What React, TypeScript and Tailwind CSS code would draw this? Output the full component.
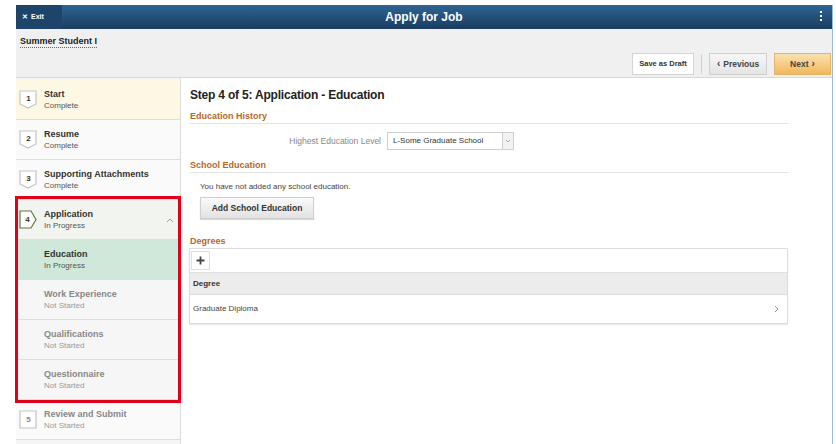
import React from "react";

type Step = {
  num?: string;
  title: string;
  status: string;
  kind: "done" | "current" | "sub" | "subActive" | "todo";
};

const steps: Step[] = [
  { num: "1", title: "Start", status: "Complete", kind: "done" },
  { num: "2", title: "Resume", status: "Complete", kind: "done" },
  { num: "3", title: "Supporting Attachments", status: "Complete", kind: "done" },
  { num: "4", title: "Application", status: "In Progress", kind: "current" },
  { title: "Education", status: "In Progress", kind: "subActive" },
  { title: "Work Experience", status: "Not Started", kind: "sub" },
  { title: "Qualifications", status: "Not Started", kind: "sub" },
  { title: "Questionnaire", status: "Not Started", kind: "sub" },
  { num: "5", title: "Review and Submit", status: "Not Started", kind: "todo" },
];

const StepBadge = ({ num, kind }: { num: string; kind: Step["kind"] }) => {
  const d =
    kind === "current"
      ? "M1 1 H12 L17 9.5 L12 18 H1 Z"
      : kind === "done"
      ? "M1 1 H17 V14 L9 18 L1 14 Z"
      : "M1 1 H17 V18 H1 Z";
  const stroke = kind === "current" ? "#5d7a3c" : "#c4c4c4";
  return (
    <div className="relative w-[19px] h-[20px] shrink-0">
      <svg width="19" height="20" viewBox="0 0 19 20" className="absolute inset-0">
        <path d={d} fill="#fff" stroke={stroke} strokeWidth="1.2" />
      </svg>
      <span
        className={`absolute inset-0 flex items-center justify-center text-[8px] font-bold ${
          kind === "current" ? "text-[#333] pr-[2px]" : kind === "todo" ? "text-[#888]" : "text-[#333]"
        } ${kind === "done" ? "pb-[2px]" : ""}`}
      >
        {num}
      </span>
    </div>
  );
};

const StepRow = ({ step }: { step: Step }) => {
  const bg =
    step.title === "Start"
      ? "bg-[#fdf8e4]"
      : step.kind === "current"
      ? "bg-[#f1f4ef]"
      : step.kind === "subActive"
      ? "bg-[#cfe8d9]"
      : step.kind === "sub"
      ? "bg-[#f6f6f6]"
      : "bg-[#fafafa]";
  const muted = step.kind === "sub" || step.kind === "todo";
  return (
    <div className={`flex items-center h-[40px] border-b border-[#dedede] ${bg}`}>
      <div className="w-[28px] flex justify-end pr-[6px]">
        {step.num && <StepBadge num={step.num} kind={step.kind} />}
      </div>
      <div className="flex-1 flex flex-col">
        <span className={`text-[9px] leading-[12px] font-bold ${muted ? "text-[#888]" : "text-[#333]"}`}>
          {step.title}
        </span>
        <span className={`text-[8px] leading-[11px] ${muted ? "text-[#999]" : "text-[#555]"}`}>{step.status}</span>
      </div>
      {step.kind === "current" && (
        <svg width="8" height="6" viewBox="0 0 8 6" className="mr-[6px]">
          <path d="M1 5 L4 2 L7 5" fill="none" stroke="#999" strokeWidth="1" />
        </svg>
      )}
    </div>
  );
};

const SectionTitle = ({ children }: { children: React.ReactNode }) => (
  <div className="text-[9px] font-bold text-[#b5682a] border-b border-[#e4e4e4] pb-[1px] leading-[12px]">{children}</div>
);

export default function App() {
  return (
    <div className="w-[836px] h-[444px] bg-white overflow-hidden font-['Liberation_Sans',Arial,sans-serif] pt-[5px] pl-[16px]">
      <div className="w-[817px] h-[439px] flex flex-col border-r border-[#9dbbd8]">
        {/* top banner */}
        <div className="h-[24px] flex items-center bg-gradient-to-b from-[#2f6494] to-[#1a3d60] relative">
          <div className="h-full w-[46px] flex items-center pl-[6px] gap-[3px] bg-[#1e4569] text-white text-[7px] font-bold">
            <span>✕</span>
            <span>Exit</span>
          </div>
          <div className="flex-1 text-center text-white text-[12px] font-bold pr-[46px]">Apply for Job</div>
          <div className="absolute right-[10px] top-[6px] flex flex-col gap-[2px]">
            <span className="w-[2px] h-[2px] bg-white" />
            <span className="w-[2px] h-[2px] bg-white" />
            <span className="w-[2px] h-[2px] bg-white" />
          </div>
        </div>

        {/* job title and nav buttons */}
        <div className="h-[49px] bg-[#f0f0f0] border-b border-[#d8d8d8] flex flex-col pl-[4px] pr-[1px] pt-[7px]">
          <span className="text-[9px] font-bold text-[#222] border-b border-dotted border-[#666] self-start leading-[11px]">
            Summer Student I
          </span>
          <div className="flex justify-end items-center gap-[7px] mt-[5px]">
            <button className="h-[22px] w-[62px] bg-white border border-[#d4d4d4] text-[7.5px] font-bold text-[#333]">
              Save as Draft
            </button>
            <span className="w-px h-[20px] bg-[#d0d0d0]" />
            <button className="h-[22px] w-[58px] bg-gradient-to-b from-[#f7f7f7] to-[#e4e4e4] border border-[#cfcfcf] text-[8.5px] font-bold text-[#444] flex items-center justify-center gap-[3px]">
              <span className="text-[10px] leading-none">‹</span>Previous
            </button>
            <button className="h-[22px] w-[57px] bg-gradient-to-b from-[#fbe1b0] to-[#f1b859] border border-[#e3b46a] text-[8.5px] font-bold text-[#444] flex items-center justify-center gap-[3px]">
              Next<span className="text-[10px] leading-none">›</span>
            </button>
          </div>
        </div>

        <div className="flex flex-1 min-h-0">
          {/* step list */}
          <div className="w-[165px] bg-[#f5f5f5] border-r border-[#dcdcdc] flex flex-col relative pt-[2px]">
            {steps.map((s) => (
              <StepRow key={s.title} step={s} />
            ))}
            <div className="absolute left-[-1px] top-[118px] w-[166px] h-[207px] border-[3px] border-[#e1001a] pointer-events-none" />
          </div>

          {/* page content */}
          <div className="flex-1 bg-white pl-[9px] pr-[44px] pt-[10px] flex flex-col">
            <h1 className="text-[12px] font-bold text-[#222] leading-[14px] tracking-[-0.2px]">
              Step 4 of 5: Application - Education
            </h1>

            <div className="mt-[8px]">
              <SectionTitle>Education History</SectionTitle>
            </div>
            <div className="flex items-center mt-[8px] ml-[91px] gap-[6px]">
              <span className="text-[8.5px] text-[#888] w-[100px] text-right">Highest Education Level</span>
              <div className="h-[18px] w-[127px] border border-[#cfcfcf] flex items-center bg-white">
                <span className="flex-1 text-[8px] text-[#333] pl-[5px]">L-Some Graduate School</span>
                <span className="w-[11px] h-full border-l border-[#cfcfcf] bg-[#f2f2f2] flex items-center justify-center">
                  <svg width="6" height="4" viewBox="0 0 6 4">
                    <path d="M1 1 L3 3 L5 1" fill="none" stroke="#999" strokeWidth="0.8" />
                  </svg>
                </span>
              </div>
            </div>

            <div className="mt-[9px]">
              <SectionTitle>School Education</SectionTitle>
            </div>
            <p className="text-[8px] text-[#444] mt-[8px] ml-[10px]">You have not added any school education.</p>
            <button className="self-start ml-[10px] mt-[4px] h-[22px] w-[114px] bg-gradient-to-b from-[#fafafa] to-[#e2e2e2] border border-[#cfcfcf] shadow-[0_1px_1px_rgba(0,0,0,0.15)] text-[8.5px] font-bold text-[#333]">
              Add School Education
            </button>

            <div className="mt-[16px] text-[9px] font-bold text-[#b5682a] leading-[12px]">Degrees</div>
            <div className="border border-[#dcdcdc] shadow-[0_1px_1px_rgba(0,0,0,0.08)] ml-[-1px] mt-[1px]">
              <div className="h-[24px] flex items-center pl-[1px] border-b border-[#e0e0e0]">
                <div className="w-[19px] h-[19px] border border-[#dedede] bg-white flex items-center justify-center">
                  <svg width="9" height="9" viewBox="0 0 9 9">
                    <path d="M4.5 0.5 V8.5 M0.5 4.5 H8.5" stroke="#444" strokeWidth="1.8" />
                  </svg>
                </div>
              </div>
              <div className="h-[22px] bg-[#ececec] flex items-center px-[3px] text-[8px] font-bold text-[#333] border-b border-[#dcdcdc]">
                Degree
              </div>
              <div className="h-[28px] flex items-center justify-between pl-[3px] pr-[8px] text-[8px] text-[#444]">
                <span>Graduate Diploma</span>
                <svg width="5" height="8" viewBox="0 0 5 8">
                  <path d="M1 1 L4 4 L1 7" fill="none" stroke="#888" strokeWidth="0.9" />
                </svg>
              </div>
            </div>
          </div>
        </div>
      </div>
    </div>
  );
}
